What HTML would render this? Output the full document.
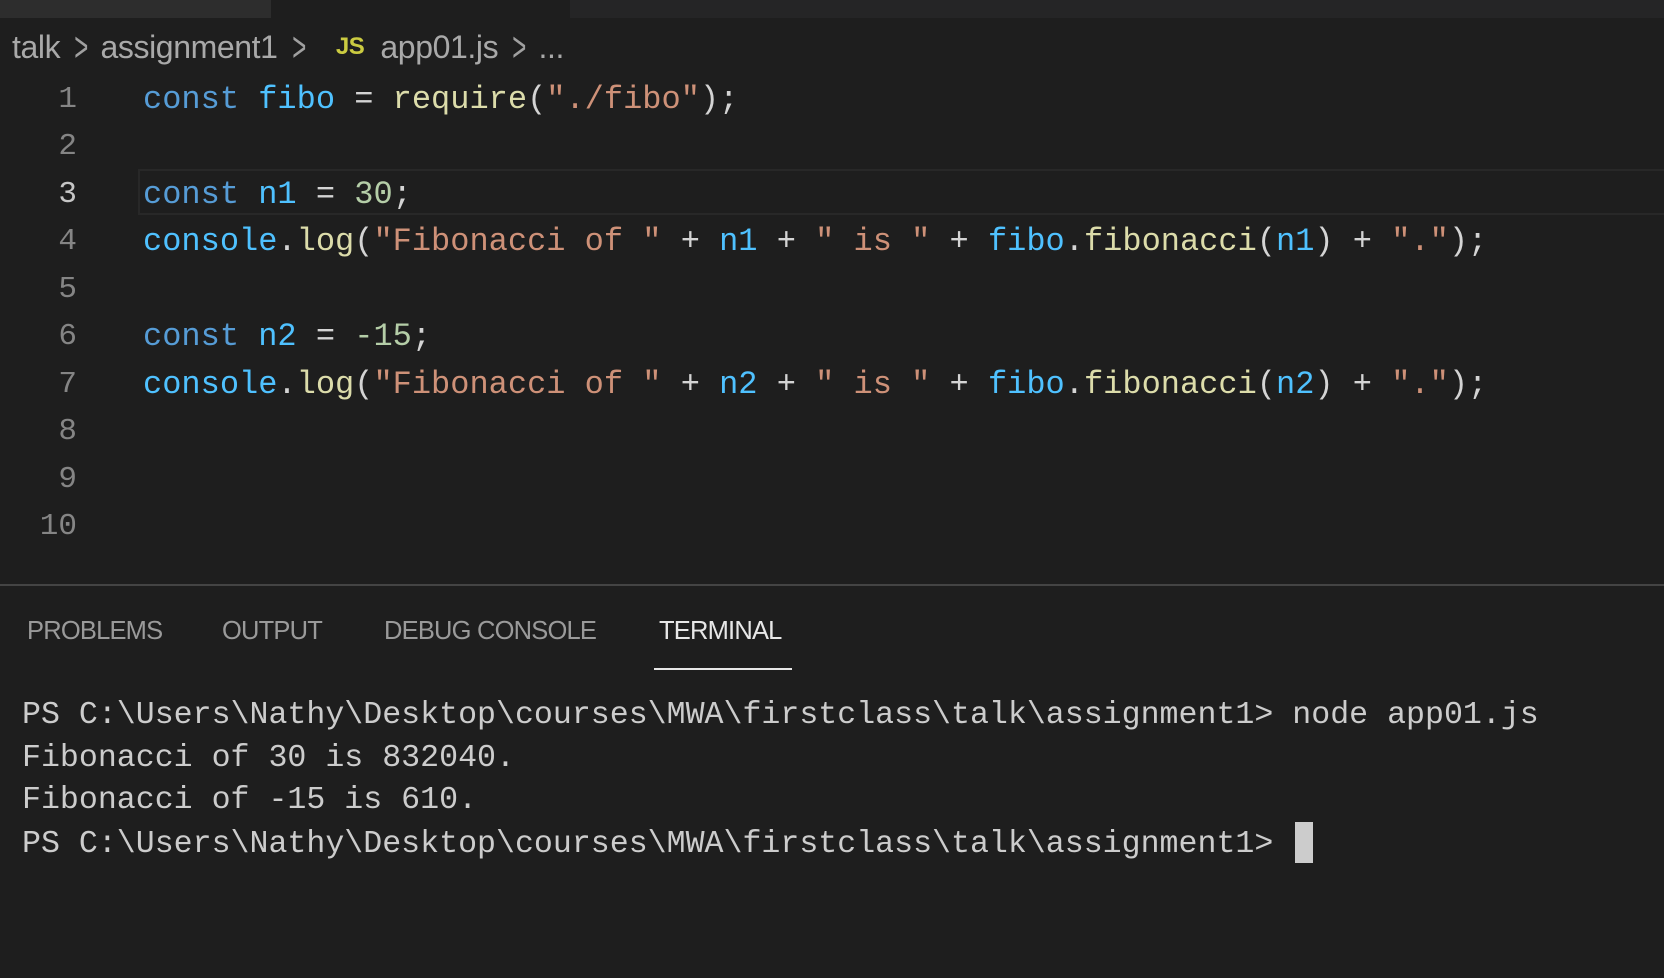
<!DOCTYPE html>
<html><head><meta charset="utf-8"><style>
*{margin:0;padding:0;box-sizing:border-box}
body{width:1664px;height:978px;background:#1e1e1e;overflow:hidden;position:relative;font-family:"Liberation Mono",monospace;color:#d4d4d4}
.tabbar{position:absolute;left:0;top:0;width:1664px;height:18px;background:#252526}
.tab1{position:absolute;left:0;top:0;width:271px;height:18px;background:#2d2d2d}
.tabA{position:absolute;left:271px;top:0;width:299px;height:18px;background:#1e1e1e}
.bc{position:absolute;left:12px;top:29px;font-family:"Liberation Sans",sans-serif;font-size:32px;color:#a9a9a9;white-space:nowrap;letter-spacing:-0.4px}
.bc .ch{display:inline-block;margin:0 10px 0 12px;transform:scaleX(0.75) scaleY(1.3);color:#a0a0a0}
.bc .js{color:#cbcb41;font-weight:bold;font-size:24px;margin:0 16px 0 18px;vertical-align:4px}
.ln{position:absolute;left:0;width:77px;text-align:right;font-size:31px;color:#858585;height:48px;line-height:48px}
.code{position:absolute;left:143px;font-size:32px;white-space:pre;height:48px;line-height:48px}
.cur{position:absolute;left:138px;top:169px;right:0;height:46px;border:2px solid #282828;border-right:none}
.k{color:#569cd6}.v{color:#4fc1ff}.f{color:#dcdcaa}.s{color:#ce9178}.n{color:#b5cea8}
.panel{position:absolute;left:0;top:584px;width:1664px;height:2px;background:#444}
.pt{position:absolute;top:617px;font-family:"Liberation Sans",sans-serif;font-size:25.5px;color:#9a9a9a;letter-spacing:-0.8px}
.ul{position:absolute;left:654px;top:668px;width:138px;height:2px;background:#e7e7e7}
.t{position:absolute;left:22px;font-size:31.6px;white-space:pre;color:#cccccc;line-height:43px;height:43px}
.cursor{position:absolute;left:1295px;top:822px;width:18px;height:41px;background:#cccccc}
</style></head><body>
<div class="tabbar"></div><div class="tab1"></div><div class="tabA"></div>
<div class="bc">talk<span class="ch">&gt;</span>assignment1<span class="ch">&gt;</span><span class="js">JS</span>app01.js<span class="ch">&gt;</span>...</div>
<div class="cur"></div>
<div class="ln" style="top:76px">1</div>
<div class="ln" style="top:123px">2</div>
<div class="ln" style="top:171px;color:#c6c6c6">3</div>
<div class="ln" style="top:218px">4</div>
<div class="ln" style="top:266px">5</div>
<div class="ln" style="top:313px">6</div>
<div class="ln" style="top:361px">7</div>
<div class="ln" style="top:408px">8</div>
<div class="ln" style="top:456px">9</div>
<div class="ln" style="top:503px">10</div>
<div class="code" style="top:76px"><span class="k">const</span> <span class="v">fibo</span> = <span class="f">require</span>(<span class="s">"./fibo"</span>);</div>
<div class="code" style="top:171px"><span class="k">const</span> <span class="v">n1</span> = <span class="n">30</span>;</div>
<div class="code" style="top:218px"><span class="v">console</span>.<span class="f">log</span>(<span class="s">"Fibonacci of "</span> + <span class="v">n1</span> + <span class="s">" is "</span> + <span class="v">fibo</span>.<span class="f">fibonacci</span>(<span class="v">n1</span>) + <span class="s">"."</span>);</div>
<div class="code" style="top:313px"><span class="k">const</span> <span class="v">n2</span> = <span class="n">-15</span>;</div>
<div class="code" style="top:361px"><span class="v">console</span>.<span class="f">log</span>(<span class="s">"Fibonacci of "</span> + <span class="v">n2</span> + <span class="s">" is "</span> + <span class="v">fibo</span>.<span class="f">fibonacci</span>(<span class="v">n2</span>) + <span class="s">"."</span>);</div>
<div class="panel"></div>
<div class="pt" style="left:27px">PROBLEMS</div>
<div class="pt" style="left:222px">OUTPUT</div>
<div class="pt" style="left:384px">DEBUG CONSOLE</div>
<div class="pt" style="left:659px;color:#e7e7e7">TERMINAL</div>
<div class="ul"></div>
<div class="t" style="top:694px">PS C:\Users\Nathy\Desktop\courses\MWA\firstclass\talk\assignment1&gt; node app01.js</div>
<div class="t" style="top:737px">Fibonacci of 30 is 832040.</div>
<div class="t" style="top:779px">Fibonacci of -15 is 610.</div>
<div class="t" style="top:823px">PS C:\Users\Nathy\Desktop\courses\MWA\firstclass\talk\assignment1&gt; </div>
<div class="cursor"></div>
</body></html>
